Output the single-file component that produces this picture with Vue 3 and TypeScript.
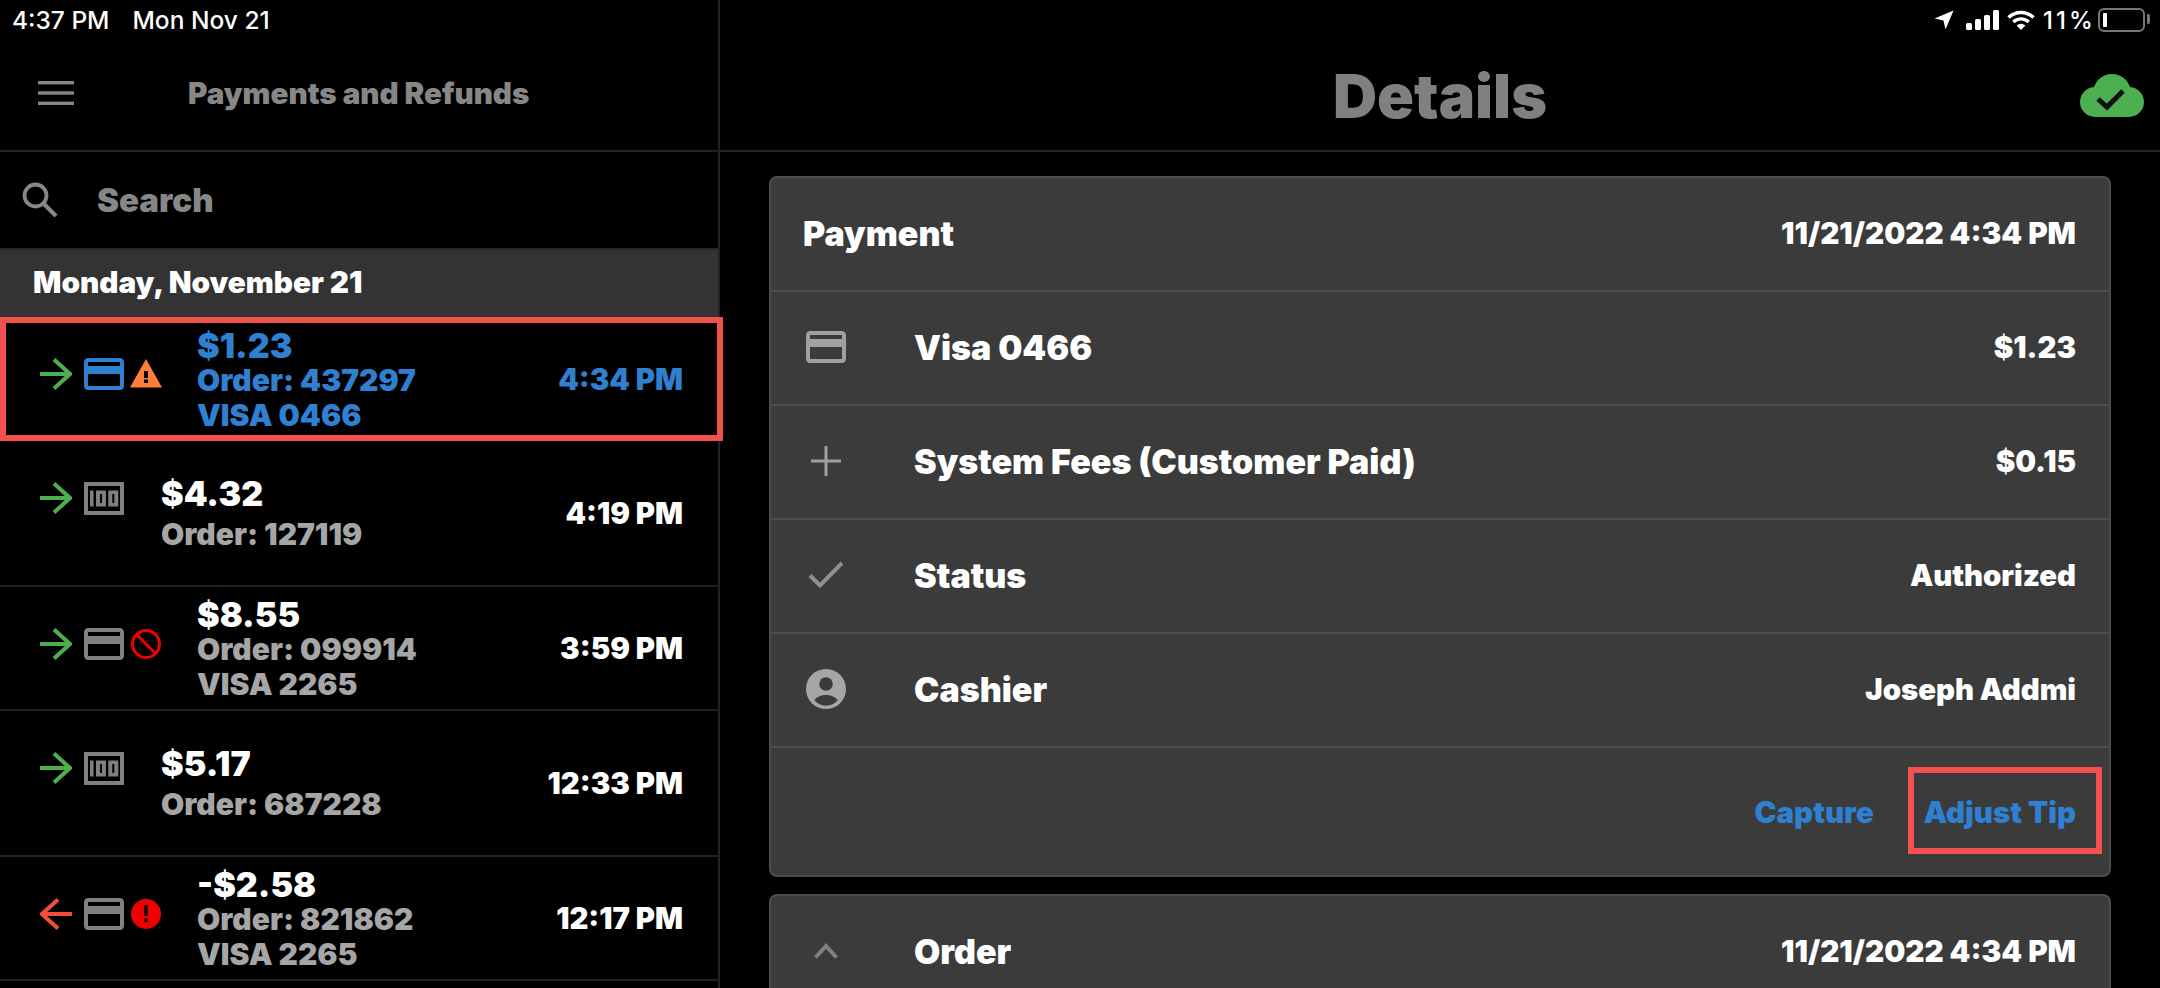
<script setup lang="ts">
type Pay = {
  dir: "in" | "out";
  kind: "card" | "cash";
  flag?: "warn" | "blocked" | "error";
  amount: string;
  order: string;
  visa?: string;
  time: string;
  active?: boolean;
};

const payments: Pay[] = [
  { dir: "in", kind: "card", flag: "warn", amount: "$1.23", order: "Order: 437297", visa: "VISA 0466", time: "4:34 PM", active: true },
  { dir: "in", kind: "cash", amount: "$4.32", order: "Order: 127119", time: "4:19 PM" },
  { dir: "in", kind: "card", flag: "blocked", amount: "$8.55", order: "Order: 099914", visa: "VISA 2265", time: "3:59 PM" },
  { dir: "in", kind: "cash", amount: "$5.17", order: "Order: 687228", time: "12:33 PM" },
  { dir: "out", kind: "card", flag: "error", amount: "-$2.58", order: "Order: 821862", visa: "VISA 2265", time: "12:17 PM" },
];

const cardPath =
  "M20 4H4c-1.11 0-1.99.89-1.99 2L2 18c0 1.11.89 2 2 2h16c1.11 0 2-.89 2-2V6c0-1.11-.89-2-2-2zm0 14H4v-6h16v6zm0-10H4V6h16v2z";
</script>

<template>
  <div class="screen">
    <aside class="left">
      <div class="status">
        <span>4:37 PM</span>
        <span>Mon Nov 21</span>
      </div>
      <header class="left-head">
        <svg class="menu" width="36" height="24" viewBox="0 0 36 24" fill="#878787">
          <rect width="36" height="3.4" />
          <rect y="10.3" width="36" height="3.4" />
          <rect y="20.6" width="36" height="3.4" />
        </svg>
        <h2>Payments and Refunds</h2>
      </header>
      <div class="search">
        <svg width="36" height="36" viewBox="0 0 36 36" fill="none" stroke="#878787">
          <circle cx="13.5" cy="13.5" r="11" stroke-width="3.8" />
          <path d="M21.5 21.5 34 34" stroke-width="4.2" />
        </svg>
        <span>Search</span>
      </div>
      <div class="day">Monday, November 21</div>

      <div
        v-for="p in payments"
        :key="p.order"
        class="pay"
        :class="{ active: p.active, tall: !p.visa }"
      >
        <div class="pay-icons">
          <svg class="arrow" :class="p.dir" width="32" height="32" viewBox="0 0 32 32" fill="none" stroke-width="4">
            <path d="M0 16H30M14 1.500 30 16 14 30.500" />
          </svg>
          <svg v-if="p.kind === 'card'" class="card-ic" width="48" height="48" viewBox="0 0 24 24">
            <path :d="cardPath" />
          </svg>
          <svg v-else class="cash-ic" width="40" height="33" viewBox="0 0 40 33">
            <path fill-rule="evenodd" d="M0 0H40V33H0ZM4 4V29H36V4Z" />
            <path fill-rule="evenodd" d="M6 8.500H9.500V24.500H6ZM12 8.500H22V24.500H12ZM16 12V21H18V12ZM24.300 8.500H34.300V24.500H24.300ZM28.300 12V21H30.300V12Z" />
          </svg>
          <svg v-if="p.flag === 'warn'" class="flag" width="32" height="30" viewBox="0 0 32 30">
            <path fill="#ff7f36" d="M0 28.500 16 0 32 28.500Z" />
            <path fill="#000" d="M14 12h4v7h-4zM14 20.500h4v3.500h-4z" />
          </svg>
          <svg v-else-if="p.flag === 'blocked'" class="flag" width="32" height="32" viewBox="0 0 32 32" fill="none" stroke="#f00000" stroke-width="3">
            <circle cx="16" cy="16" r="13.500" />
            <path d="M6.500 6.500 25.500 25.500" />
          </svg>
          <svg v-else-if="p.flag === 'error'" class="flag" width="32" height="32" viewBox="0 0 32 32">
            <circle cx="16" cy="16" r="15" fill="#f00000" />
            <path fill="#000" d="M14.300 7h3.400v11h-3.400zM14.300 20.500h3.400v3.600h-3.400z" />
          </svg>
        </div>
        <div class="pay-text">
          <div class="amount">{{ p.amount }}</div>
          <div class="sub">{{ p.order }}</div>
          <div v-if="p.visa" class="sub">{{ p.visa }}</div>
        </div>
        <div class="time">{{ p.time }}</div>
        <div v-if="p.active" class="mark"></div>
      </div>
    </aside>

    <main class="right">
      <div class="status status-right">
        <svg width="20" height="20" viewBox="0 0 20 20" fill="#fff"><path d="M19.500.5 11.500 19.500 9.500 10.500.5 8.500Z" /></svg>
        <svg class="bars" width="33" height="20" viewBox="0 0 33 20" fill="#fff">
          <rect y="13" width="6" height="7" rx="1.500" />
          <rect x="9" y="9" width="6" height="11" rx="1.500" />
          <rect x="18" y="5" width="6" height="15" rx="1.500" />
          <rect x="27" width="6" height="20" rx="1.500" />
        </svg>
        <svg width="28" height="20" viewBox="0 0 28 20" fill="none" stroke="#fff" stroke-width="3.400">
          <path d="M1.500 7.500a18 18 0 0 1 25 0" />
          <path d="M6.300 12a11 11 0 0 1 15.400 0" />
          <path fill="#fff" stroke="none" d="M14 20 9.600 15.400a6.400 6.400 0 0 1 8.800 0Z" />
        </svg>
        <span class="pct">11%</span>
        <span class="battery"><i></i></span>
      </div>
      <header class="right-head">
        <h1>Details</h1>
        <svg class="cloud" width="64" height="44" viewBox="0 0 64 44">
          <g fill="#4caf50">
            <circle cx="32" cy="19" r="19" />
            <circle cx="15" cy="28" r="15" />
            <circle cx="49" cy="28" r="15" />
            <rect x="15" y="24" width="34" height="19" />
          </g>
          <path fill="none" stroke="#111" stroke-width="5" d="M18 25 27 33 43 17" />
        </svg>
      </header>

      <div class="content">
        <section class="panel">
          <div class="line head">
            <b>Payment</b>
            <b class="val date">11/21/2022 4:34 PM</b>
          </div>
          <div class="line">
            <span class="ic">
              <svg width="48" height="48" viewBox="0 0 24 24" fill="#a0a0a0"><path :d="cardPath" /></svg>
            </span>
            <b>Visa 0466</b>
            <b class="val">$1.23</b>
          </div>
          <div class="line">
            <span class="ic">
              <svg width="30" height="30" viewBox="0 0 30 30" stroke="#a0a0a0" stroke-width="3"><path d="M15 0V30M0 15H30" /></svg>
            </span>
            <b>System Fees (Customer Paid)</b>
            <b class="val">$0.15</b>
          </div>
          <div class="line">
            <span class="ic">
              <svg width="36" height="28" viewBox="0 0 36 28" fill="none" stroke="#909090" stroke-width="4"><path d="M2 14.500 12 24.500 34 2" /></svg>
            </span>
            <b>Status</b>
            <b class="val">Authorized</b>
          </div>
          <div class="line">
            <span class="ic">
              <svg width="40" height="40" viewBox="0 0 40 40">
                <circle cx="20" cy="20" r="20" fill="#a6a6a6" />
                <circle cx="20" cy="15" r="6.800" fill="#3b3b3b" />
                <path fill="#3b3b3b" d="M8.300 31C11 27.500 15.500 26 20 26s9 1.500 11.700 5C29 34.800 24.500 36.700 20 36.700S11 34.800 8.300 31Z" />
              </svg>
            </span>
            <b>Cashier</b>
            <b class="val">Joseph Addmi</b>
          </div>
          <div class="actions">
            <a>Capture</a>
            <a class="tip">Adjust Tip<span class="mark"></span></a>
          </div>
        </section>

        <section class="panel">
          <div class="line">
            <span class="ic">
              <svg width="24" height="16" viewBox="0 0 24 16" fill="none" stroke="#808080" stroke-width="4"><path d="M1.500 14.500 12 3 22.500 14.500" /></svg>
            </span>
            <b>Order</b>
            <b class="val date">11/21/2022 4:34 PM</b>
          </div>
        </section>
      </div>
    </main>
  </div>
</template>

<style>
html,
body {
  background: #000;
  overflow: hidden;
}
</style>

<style scoped>
.screen {
  width: 2160px;
  height: 988px;
  display: flex;
  overflow: hidden;
  background: #000;
  color: #fff;
  font-family: Inter, Roboto, "Liberation Sans", sans-serif;
  font-weight: 900;
}
.left {
  width: 720px;
  flex: none;
  border-right: 2px solid #222;
  box-sizing: border-box;
}
.status {
  height: 40px;
  display: flex;
  align-items: center;
  gap: 23px;
  padding-left: 12px;
  font-size: 24.5px;
  font-weight: 500;
}
.left-head {
  height: 112px;
  box-sizing: border-box;
  border-bottom: 2px solid #222;
  display: flex;
  align-items: center;
  padding: 0 0 4px 38px;
  margin-right: -2px;
}
.left-head h2 {
  margin: 0 0 0 114px;
  font-size: 29.6px;
  font-weight: 900;
  color: #878787;
}
.search {
  height: 96px;
  box-sizing: border-box;
  display: flex;
  align-items: center;
  padding-left: 22px;
  gap: 39px;
  color: #878787;
  font-size: 33px;
}
.day {
  height: 69px;
  box-sizing: border-box;
  border-top: 2px solid #262626;
  background: #333;
  display: flex;
  align-items: center;
  padding: 0 0 4px 33px;
  font-size: 29.7px;
}
.pay {
  position: relative;
  min-height: 124px;
  box-sizing: border-box;
  border-bottom: 2px solid #222;
  display: flex;
  align-items: center;
  padding: 0 35px 0 40px;
  gap: 37px;
}
.pay.tall {
  min-height: 146px;
}
.pay.active {
  border-bottom: 0;
  color: #2f80d0;
}
.pay-icons {
  align-self: flex-start;
  margin-top: 41px;
  height: 32px;
  display: flex;
  align-items: center;
}
.arrow.in {
  stroke: #4caf50;
}
.arrow.out {
  stroke: #f44e3b;
  transform: scaleX(-1);
}
.card-ic {
  margin: 0 -4px 0 8px;
  fill: #808080;
}
.active .card-ic {
  fill: #2f80d0;
}
.cash-ic {
  margin-left: 12px;
  fill: #808080;
}
.flag {
  margin: 0 -2px 0 6px;
}
.pay-text {
  flex: 1;
  padding-top: 2px;
}
.amount {
  font-size: 34px;
  line-height: 35px;
}
.sub {
  font-size: 30px;
  line-height: 35px;
  color: #a6a6a6;
}
.tall .amount {
  line-height: 41px;
}
.tall .sub {
  line-height: 41px;
}
.active .sub {
  color: inherit;
}
.time {
  font-size: 29.3px;
}
.mark {
  position: absolute;
  left: 0;
  right: -5px;
  top: 0;
  bottom: 0;
  border: 6px solid #f55050;
  pointer-events: none;
}
.right {
  flex: 1;
  min-width: 0;
}
.status-right {
  justify-content: flex-end;
  gap: 8px;
  padding: 0 10px 0 0;
}
.bars {
  margin-left: 4px;
}
.pct {
  width: 48px;
  font-size: 24px;
  letter-spacing: 3px;
  white-space: nowrap;
  margin-right: -1px;
}
.battery {
  position: relative;
  width: 47px;
  height: 24px;
  box-sizing: border-box;
  border: 2px solid #777;
  border-radius: 6px;
  padding: 3px;
  margin-right: 5px;
}
.battery i {
  display: block;
  width: 4px;
  height: 14px;
  background: #fff;
  border-radius: 1px;
}
.battery::after {
  content: "";
  position: absolute;
  right: -7px;
  top: 4px;
  width: 3px;
  height: 10px;
  background: #777;
  border-radius: 0 2px 2px 0;
}
.right-head {
  position: relative;
  height: 112px;
  box-sizing: border-box;
  border-bottom: 2px solid #222;
  display: flex;
  align-items: center;
  justify-content: center;
  padding-top: 2px;
}
.right-head h1 {
  margin: 0;
  font-size: 61px;
  font-weight: 900;
  color: #808080;
}
.cloud {
  position: absolute;
  right: 16px;
  top: 34px;
}
.content {
  padding: 24px 49px 0;
  display: flex;
  flex-direction: column;
  gap: 17px;
}
.panel {
  background: #3b3b3b;
  border: 2px solid #4d4d4d;
  border-radius: 8px;
}
.line {
  height: 114px;
  box-sizing: border-box;
  border-bottom: 2px solid #4d4d4d;
  display: flex;
  align-items: center;
  padding: 0 33px 2px 32px;
  font-size: 34px;
}
.line b {
  font-weight: 900;
}
.ic {
  width: 46px;
  margin-right: 65px;
  flex: none;
  display: flex;
  justify-content: center;
}
.ic svg {
  flex: none;
}
.val {
  margin-left: auto;
  font-size: 29.3px;
}
.val.date {
  font-size: 29.7px;
}
.actions {
  height: 127px;
  display: flex;
  align-items: center;
  justify-content: flex-end;
  gap: 50px;
  padding-right: 33px;
  color: #2f80d0;
  font-size: 29.5px;
}
.tip {
  position: relative;
}
.tip .mark {
  left: -16px;
  right: -26px;
  top: -27px;
  bottom: -24px;
}
</style>
